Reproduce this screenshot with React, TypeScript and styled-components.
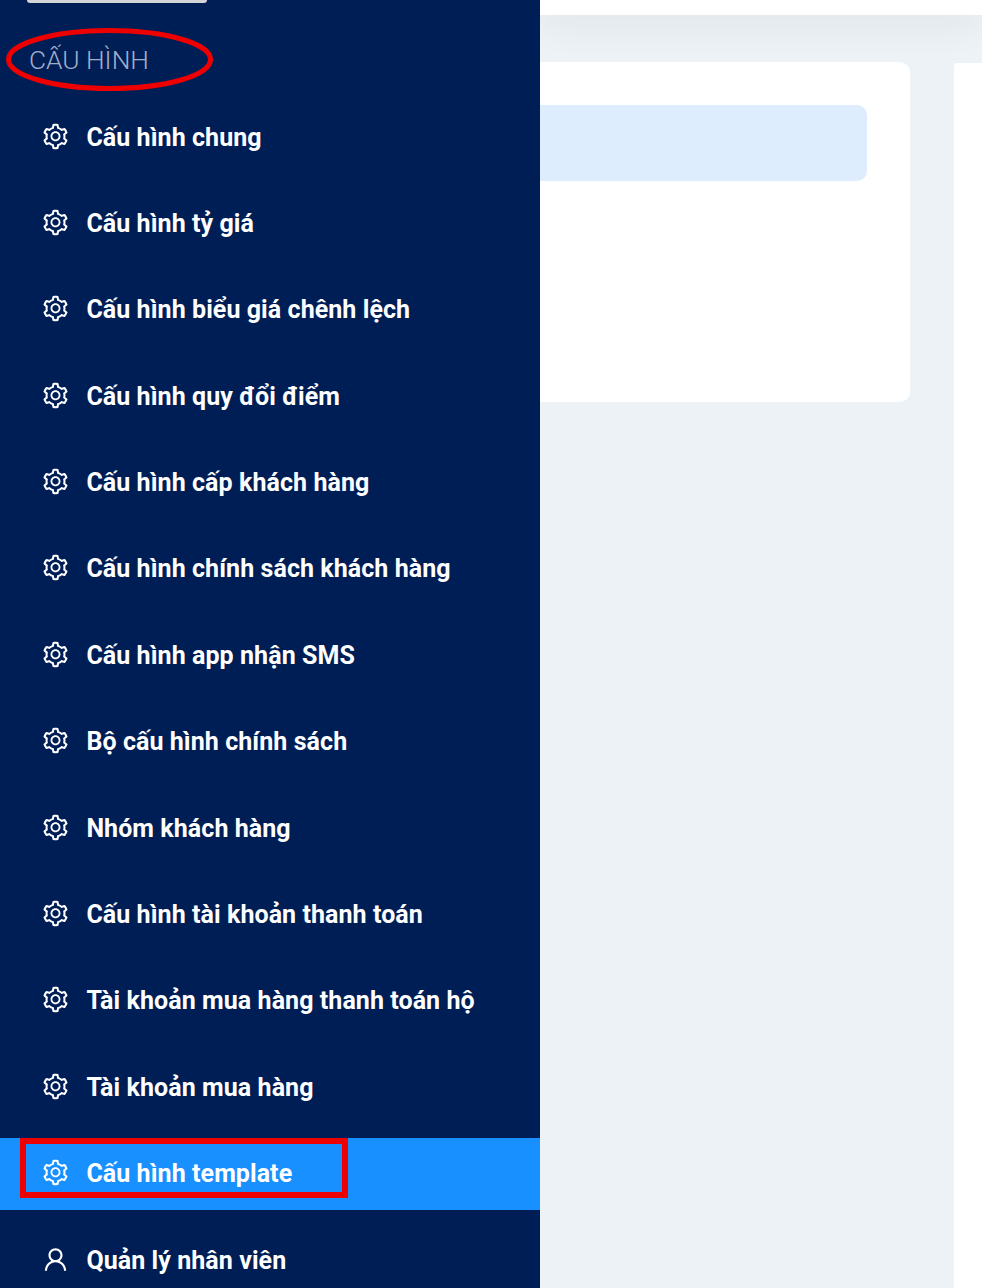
import React from "react";
import styled, { createGlobalStyle } from "styled-components";
import { AiOutlineSetting, AiOutlineUser } from "react-icons/ai";

const Global = createGlobalStyle`
  html, body { margin: 0; padding: 0; height: 100%; overflow: hidden; background: #edf2f6; }
  #root { height: 100%; }
`;

const Page = styled.div`
  display: flex;
  height: 1288px;
  overflow: hidden;
  font-family: Roboto, "Noto Sans", sans-serif;
`;

const Sidebar = styled.aside`
  position: relative;
  flex: 0 0 540px;
  height: 1288px;
  overflow: hidden;
  background: #001e56;
  z-index: 2;
`;

const TopButton = styled.div`
  width: 180px;
  height: 3px;
  margin-left: 27px;
  background: #d3d4d8;
  border-radius: 0 0 3px 3px;
`;

const Heading = styled.div`
  padding: 41px 0 0 29px;
  height: 57px;
  box-sizing: border-box;
  font-size: 26.3px;
  line-height: 33px;
  font-weight: 300;
  color: #a3aeca;
  white-space: nowrap;
`;

const Menu = styled.ul`
  list-style: none;
  margin: 41px 0 0;
  padding: 0;
  display: flex;
  flex-direction: column;
  gap: 14.4px;
`;

const Item = styled.li<{ $active?: boolean }>`
  position: relative;
  flex: 0 0 72px;
  display: flex;
  align-items: center;
  gap: 16.4px;
  padding-left: 41px;
  color: #fff;
  background: ${(p) => (p.$active ? "#1890ff" : "transparent")};
  font-size: 25px;
  font-weight: 700;
  letter-spacing: 0.07px;
  white-space: nowrap;
  svg { flex: 0 0 29px; width: 29px; height: 29px; margin-top: -2px; }
`;

const Oval = styled.svg`
  position: absolute;
  left: 4px;
  top: 26px;
  width: 212px;
  height: 66px;
`;

const RedBox = styled.div`
  position: absolute;
  left: 20px;
  top: 0;
  width: 328px;
  height: 60px;
  box-sizing: border-box;
  border: 6px solid #ef0000;
`;

const Main = styled.main`
  flex: 1;
  display: flex;
  flex-direction: column;
  min-width: 0;
`;

const TopBar = styled.div`
  flex: 0 0 15px;
  background: #fff;
  box-shadow: 0 2px 40px rgba(0, 0, 0, 0.12);
  position: relative;
`;

const Content = styled.div`
  flex: 1;
  display: flex;
  gap: 44px;
  padding-top: 47px;
  align-items: flex-start;
  position: relative;
`;

const Card = styled.section`
  flex: 0 0 370px;
  height: 340px;
  box-sizing: border-box;
  padding: 43px 43px 0 0;
  background: #fff;
  border-radius: 0 10px 10px 0;
`;

const Banner = styled.div`
  height: 76px;
  background: #ddedfd;
  border-radius: 0 10px 10px 0;
`;

const SidePanel = styled.section`
  flex: 1;
  align-self: stretch;
  margin-top: 1px;
  background: #fff;
  border-radius: 3px 0 0 0;
`;

const items = [
  "Cấu hình chung",
  "Cấu hình tỷ giá",
  "Cấu hình biểu giá chênh lệch",
  "Cấu hình quy đổi điểm",
  "Cấu hình cấp khách hàng",
  "Cấu hình chính sách khách hàng",
  "Cấu hình app nhận SMS",
  "Bộ cấu hình chính sách",
  "Nhóm khách hàng",
  "Cấu hình tài khoản thanh toán",
  "Tài khoản mua hàng thanh toán hộ",
  "Tài khoản mua hàng",
];

export default function App() {
  return (
    <Page>
      <Global />
      <Sidebar>
        <TopButton />
        <Heading>CẤU HÌNH</Heading>
        <Oval viewBox="0 0 212 66">
          <ellipse cx="105.5" cy="33.5" rx="101" ry="29" fill="none" stroke="#ef0000" strokeWidth="5" />
        </Oval>
        <Menu>
          {items.map((t) => (
            <Item key={t}>
              <AiOutlineSetting />
              {t}
            </Item>
          ))}
          <Item $active>
            <AiOutlineSetting />
            Cấu hình template
            <RedBox />
          </Item>
          <Item>
            <AiOutlineUser />
            Quản lý nhân viên
          </Item>
        </Menu>
      </Sidebar>
      <Main>
        <TopBar />
        <Content>
          <Card>
            <Banner />
          </Card>
          <SidePanel />
        </Content>
      </Main>
    </Page>
  );
}
